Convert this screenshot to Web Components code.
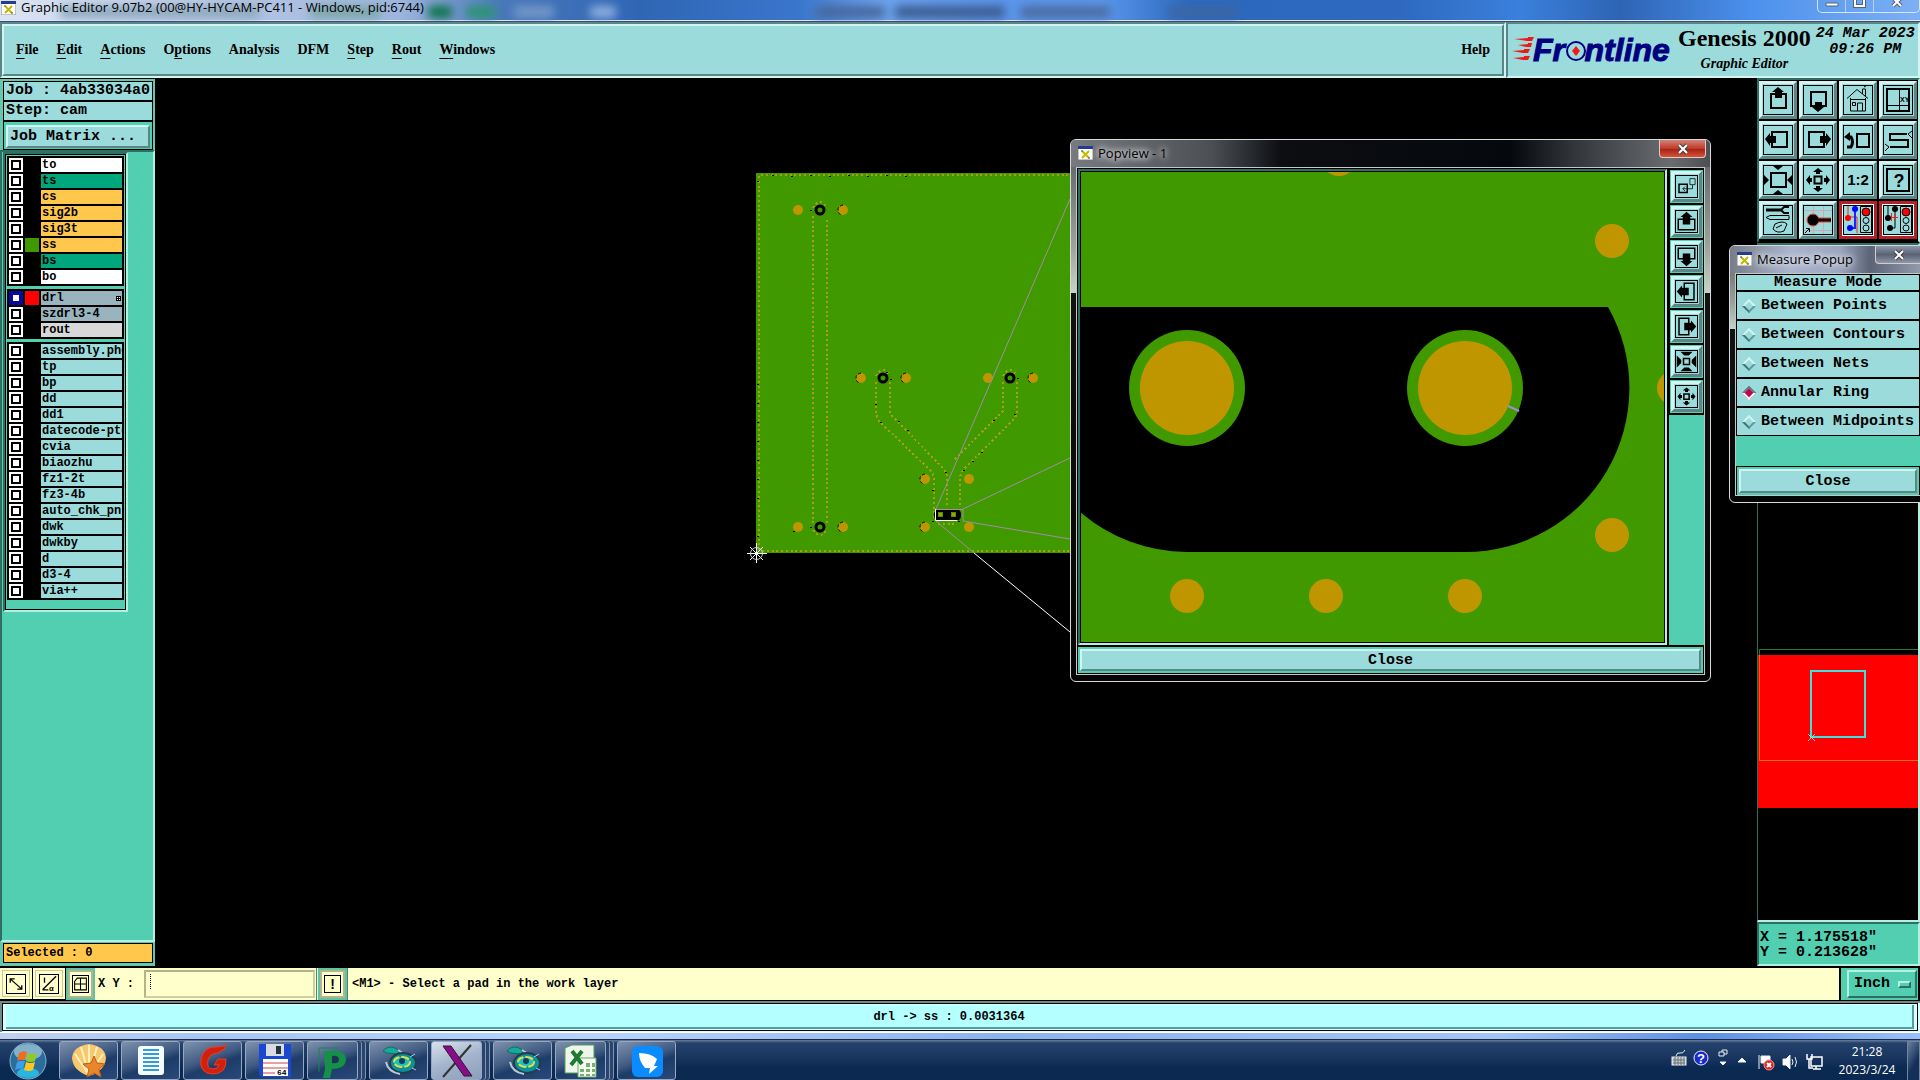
<!DOCTYPE html>
<html lang="en">
<head>
<meta charset="utf-8">
<title>Graphic Editor</title>
<style>
html,body{margin:0;height:100%;background:#000;overflow:hidden}
body{
  --cyan:#9cdbdb;--cyan-hi:#d2f4f2;--cyan-lo:#5a8688;
  --teal:#52cfb0;--teal-hi:#b4f0e2;--teal-lo:#2f6e63;
  --cream:#ffffcc;--cream-lo:#b4b48c;
  --mono:"Liberation Mono","Courier New",monospace;
  --serif:"Liberation Serif","Times New Roman",serif;
  --ui:"Open Sans","Noto Sans CJK SC",sans-serif;
  font:bold 12px/14px var(--mono);color:#000}
</style>
</head>
<body>
<gx-app></gx-app>
<script>
const define = (name, html, setup) => {
  const tpl = document.createElement('template');
  tpl.innerHTML = '<style>*{box-sizing:border-box}button,input,select{font:inherit;color:inherit;margin:0;border-radius:0}</style>' + html;
  customElements.define(name, class extends HTMLElement {
    connectedCallback() {
      if (this.shadowRoot) return;
      const root = this.attachShadow({mode: 'open'});
      root.append(tpl.content.cloneNode(true));
      if (setup) setup.call(this, root);
    }
  });
};

/* Icons on a 30 x 30 grid, the outer unit being the frame */
const ICONS = {
  up: '<path d="M8 9h15v14h-15z" class="s2"/><path d="M15 2l6 5h-2v6h-7v-6h-3z"/>',
  down: '<path d="M8 7h15v14h-15z" class="s2"/><path d="M15 27l-6-5h3v-5h7v5h2z"/>',
  left: '<path d="M9 7h15v15h-15z" class="s2"/><path d="M2 14l5-6v3h6v7h-6v3z"/>',
  right: '<path d="M6 7h15v15h-15z" class="s2"/><path d="M28 14l-5-6v3h-6v7h6v3z"/>',
  home: '<path d="M4 13.500L14 4.500L25 13.500M7.500 13v13h15v-13M7 14.500h15M9.500 17.500h3v3h-3zM14.500 26v-8h5v8M19.500 9v-5h3v7M21 2l2-1" class="s1"/>',
  xy: '<path d="M4 4h22v22h-22z" class="s2"/><path d="M16.500 4v22M4 20.500h22" class="s1"/><text x="17" y="17" font-size="7">XY</text>',
  undo: '<path d="M14 9h12v13h-12z" class="s2"/><path d="M4 22h4q3-5 0-10h-2" class="s3"/><path d="M1 12l6-5v9z"/>',
  snake: '<path d="M24 9h-17v6h18v7h-18" class="s2"/><path d="M29 6l-4 3l4 4M2 19l4 3l-4 4" class="s1"/>',
  grow: '<path d="M8 8h15v14h-15z" class="s2"/><path d="M10 1h10l-5 4zM10 29h10l-5-4zM1 10v10l5-5zM29 10v10l-5-5z"/>',
  shrink: '<path d="M11.500 11.500h7v7h-7z" class="s2"/><path d="M15 3l5 4h-3v2h-4v-2h-3zM15 27l5-4h-3v-2h-4v2h-3zM3 15l4-5v3h2v4h-2v3zM27 15l-4-5v3h-2v4h2v3z"/>',
  ratio: '<text x="15" y="20" font-size="15" text-anchor="middle">1:2</text>',
  help: '<path d="M4 4h22v22h-22z" class="s2"/><text x="16" y="22" font-size="18" text-anchor="middle">?</text>',
  tools: '<path d="M3 5h15" class="s3"/><path d="M26 2h-5l-3 3l3 3h5" class="s2"/><path d="M3 12.500l4-2h19v4h-19zM10 24l2-5q8-4 12 0l-3 7q-7 3-11-2zM13 23l6-3" class="s1"/>',
  pad: '<path d="M1 5.500h28M1 25.500h28M20.500 1v28M10.500 1v28" stroke="#d6a6ac"/><path d="M12 15h16" stroke="#ff3c3c" stroke-width="5"/><circle cx="10" cy="15" r="6" fill="#000" stroke="#ff3c3c"/><path d="M12 15h16" class="s3"/><path d="M2 28l4-4M3 23.500h3.500v3.500" class="s1"/>',
  netA: '<path d="M5 1v11h9v16" stroke="#e22" fill="none"/><path d="M12 4v19h-5" stroke="#22f" stroke-width="2" fill="none"/><circle cx="5" cy="13" r="3" fill="#f00"/><circle cx="12" cy="4" r="3" fill="#00f"/><circle cx="7" cy="23" r="3" fill="#00f"/><path d="M17.500 1.500h11v26h-11z" class="s1"/><circle cx="23" cy="7" r="4" fill="red" stroke="#000"/><circle cx="23" cy="15.500" r="3" class="s1"/><circle cx="23" cy="23" r="3" class="s1"/>',
  netB: '<path d="M5 1v12M12 4v19h-5" class="s1"/><path d="M6 12.500h9M8.500 8v8M11.500 8v8" stroke="#e22"/><circle cx="5" cy="13" r="3"/><circle cx="12" cy="4" r="3"/><circle cx="7" cy="23" r="3"/><path d="M17.500 1.500h11v26h-11z" class="s1"/><circle cx="23" cy="7" r="4" fill="red" stroke="#000"/><circle cx="23" cy="15.500" r="3" class="s1"/><circle cx="23" cy="23" r="3" class="s1"/>',
  popout: '<path d="M5 12h11v11h-11z" class="s2"/><path d="M19.500 4.500h7v8h-7zM23 13v5h-13M13 15l-3 3l3 3" class="s1"/>',
  squeeze: '<path d="M11 11h8v8h-8z" class="s2"/><path d="M7 2h16l-5 5h-6zM7 28h16l-5-5h-6zM2 7v16l6-6v-4zM28 7v16l-6-6v-4z"/>',
  bigUp: '<path d="M4 12h22v14h-22z" class="s2"/><path d="M15 2l8 7h-3v10h-10v-10h-3z"/>',
  bigDown: '<path d="M4 4h22v14h-22z" class="s2"/><path d="M15 28l-8-7h3v-10h10v10h3z"/>',
  bigLeft: '<path d="M12 4h13v22h-13z" class="s2"/><path d="M2 15l7-8v3h9v10h-9v3z"/>',
  bigRight: '<path d="M5 4h13v22h-13z" class="s2"/><path d="M28 15l-7-8v3h-9v10h9v3z"/>',
  zoomline: '<path d="M6 7L24 23M6 13v-6h7M24 17v6h-7" class="s2"/>',
  angle: '<path d="M5 24L26 3M5 24h9M8 5v8" class="s2"/><text x="15" y="26" font-size="12">α</text>',
  grid: '<path d="M9 4h17v22h-22v-16zM4 15h22M15 4v22" class="s2"/>',
  bang: '<text x="15" y="24" font-size="26" text-anchor="middle">!</text>'
};
define('gx-icon', `<style>
:host{display:block;width:30px;height:30px}
svg{display:block;width:100%;height:100%}
.s1{fill:none;stroke:#000;stroke-width:1}.s2{fill:none;stroke:#000;stroke-width:2}.s3{fill:none;stroke:#000;stroke-width:3}
text{font-family:"Liberation Sans",sans-serif;font-weight:bold}
</style><svg viewBox="1 1 28 28" aria-hidden="true"></svg>`, function (root) {
  root.querySelector('svg').innerHTML = ICONS[this.getAttribute('name')] || '';
});

define('gx-tool', `<style>
:host{display:block}
button{display:block;width:100%;padding:1px;background:var(--cyan);border:3px solid;border-color:var(--cyan-hi) var(--cyan-lo) var(--cyan-lo) var(--cyan-hi)}
:host([alert]) button{border-color:#b02228}
:host([alert]) gx-icon{outline:1px solid #fff}
gx-icon{width:100%;height:auto;aspect-ratio:1;border:1px solid #000}
</style><button type="button"></button>`, function (root) {
  const icon = document.createElement('gx-icon');
  icon.setAttribute('name', this.getAttribute('icon'));
  const button = root.querySelector('button');
  button.setAttribute('aria-label', this.getAttribute('icon'));
  button.append(icon);
});

define('gx-xmark', `<style>:host{display:block;width:15px;height:14px;flex:none}svg{display:block}</style>
<svg width="15" height="14" aria-hidden="true"><path d="M0 0h15v14h-15z" fill="#fff" stroke="#888"/><path d="M0 0h15v3h-15z" fill="#223c90"/><path d="M4 5l7 7M11 5l-7 7" stroke="#c3b800" stroke-width="2"/><path d="M3 5h2M10 12h2" stroke="#555"/></svg>`);

define('gx-titlebar', `<style>
:host{display:flex;align-items:flex-start;height:22px;border-bottom:1px solid #3b4c78;overflow:hidden;position:relative;
 box-shadow:inset 0 -1px #dfe8ff;
 background:linear-gradient(90deg,#dbe4f2 0,#b4c5e4 240px,#9db5dc 400px,#4a78ba 500px,#2f66b4 640px,#3a76cc 800px,#6ca2ec 880px,#5b95ea 1000px,#5c98ec 1100px,#2b68bd 1190px,#2e69bf 1400px,#3a80dc 1520px,#2e64b4 1620px,#4a90ec 1750px,#7eb0f4)}
gx-xmark{margin:1px 5px 0 1px;position:relative}
span{font:13px/15px var(--ui);position:relative;white-space:nowrap}
.blur{position:absolute;inset:0;filter:blur(5px)}
.blur i{position:absolute;top:6px;height:12px;border-radius:4px}
.ctl{margin-left:auto;display:flex;height:13px;position:relative;border:1px solid #d7e6ff;border-top:0;border-radius:0 0 5px 5px}
.ctl button{width:28px;padding:0;background:none;border:0;border-right:1px solid #b7cdf2;display:grid;place-items:start center}
.ctl button:last-child{width:45px;border:0}
svg{display:block}
</style>
<div class="blur"><i style="left:428px;width:24px;background:#0a7244"></i><i style="left:466px;width:30px;background:#2a9470"></i><i style="left:310px;width:70px;background:#7aa6a4"></i><i style="left:514px;width:40px;background:#7499c8"></i><i style="left:60px;width:200px;background:#8ca8bc"></i><i style="left:590px;width:26px;background:#8fb0e0"></i><i style="left:815px;width:70px;background:#46689c"></i><i style="left:895px;width:110px;background:#3c5c90"></i><i style="left:1020px;width:90px;background:#4a6ca0"></i><i style="left:1168px;width:70px;background:#3c66a4"></i></div>
<gx-xmark></gx-xmark><span>Graphic Editor 9.07b2 (00@HY-HYCAM-PC411 - Windows, pid:6744)</span>
<div class="ctl"><button aria-label="Minimize"><svg width="14" height="10"><path d="M1 3h12v3h-12z" fill="#fff" stroke="#567"/></svg></button><button aria-label="Restore"><svg width="14" height="10"><path d="M2 -2h9v8h-9z" fill="none" stroke="#567" stroke-width="4"/><path d="M2 -2h9v8h-9z" fill="none" stroke="#fff" stroke-width="2"/></svg></button><button aria-label="Close"><svg width="14" height="10"><path d="M3 -2l8 8M11 -2l-8 8" stroke="#567" stroke-width="4"/><path d="M3 -2l8 8M11 -2l-8 8" stroke="#fff" stroke-width="2"/></svg></button></div>`);

define('gx-menubar', `<style>
:host{display:block;flex:1;background:var(--cyan);border:2px solid;border-color:var(--cyan-lo) var(--cyan-hi) var(--cyan-hi) var(--cyan-lo)}
nav{display:flex;align-items:center;gap:18px;height:52px;padding:0 12px;border:2px solid;border-color:var(--cyan-hi) var(--cyan-lo) var(--cyan-lo) var(--cyan-hi)}
button{padding:0;border:0;background:none;font:bold 14px/18px var(--serif)}
button:last-child{margin-left:auto}
u{text-underline-offset:4px;text-decoration-thickness:1px}
</style><nav><button><u>F</u>ile</button><button><u>E</u>dit</button><button><u>A</u>ctions</button><button>O<u>p</u>tions</button><button>Analysis</button><button>DFM</button><button><u>S</u>tep</button><button><u>R</u>out</button><button><u>W</u>indows</button><button>Help</button></nav>`);

define('gx-brand', `<style>
:host{display:flex;align-items:flex-start;padding:2px 1px 0 4px;gap:5px;background:var(--cyan);border:2px solid;border-color:var(--cyan-lo) var(--cyan-hi) var(--cyan-hi) var(--cyan-lo)}
svg{display:block;margin-top:5px}
.name{display:flex;flex-direction:column;align-items:center;font:bold 24px/24px var(--serif);white-space:nowrap}
.name i{font-size:14px;line-height:28px}
time{font:italic bold 15px/16px var(--mono);text-align:center;white-space:nowrap}
svg text{font:italic bold 32px "Liberation Sans",sans-serif;fill:#000080;stroke:#000080;stroke-width:1}
</style>
<svg width="161" height="40" viewBox="0 0 161 40" role="img" aria-label="Frontline"><path d="M2 8l14-1v-1h6l-2 4h-5zM6 14l10-1v-1h4l-1 4h-5zM0 20l12-1v-1h6l-2 4h-5zM1 27l11-1v-1h6l-2 4h-5z" fill="#f21818"/><text x="21" y="30">Fr<tspan style="fill:none;stroke:none">o</tspan>ntline</text><circle cx="64" cy="20" r="9" fill="none" stroke="#000080" stroke-width="2"/><path d="M64 15l4 5l-4 5l-4-5z" fill="#f21818"/></svg>
<div class="name"><span>Genesis 2000</span><i>Graphic Editor</i></div>
<time>24 Mar 2023<br>09:26 PM</time>`);

const layer = (n, c, extra = '') => `<gx-layer style="--c:${c}" ${extra}>${n}</gx-layer>`;
const others = ['assembly.pho', 'tp', 'bp', 'dd', 'dd1', 'datecode-pto', 'cvia', 'biaozhu', 'fz1-2t', 'fz3-4b', 'auto_chk_pnl', 'dwk', 'dwkby', 'd', 'd3-4', 'via++'];
define('gx-layer', `<style>
:host{display:block}
label{display:grid;grid-template-columns:14px 14px 1fr;gap:2px;height:14px}
input{appearance:none;width:14px;height:14px;border:0;background:#fff;box-shadow:inset 0 0 0 2px #fff,inset 0 0 0 4px #000}
:host([work]) input{box-shadow:inset 0 0 0 4px #0a0a9a}
i{background:var(--swatch,#000)}
span{display:block;background:var(--c);padding-left:1px;overflow:hidden;white-space:nowrap;position:relative}
svg{position:absolute;right:1px;top:5px;display:none}
:host([work]) svg{display:block}
</style><label><input type="checkbox"><i></i><span><slot></slot><svg width="5" height="5"><path d="M0 0h5v5h-5z"/><path d="M1 1h1v1h-1zM3 1h1v1h-1zM1 3h1v1h-1zM3 3h1v1h-1z" fill="#fff"/></svg></span></label>`);

define('gx-sidebar', `<style>
:host{display:flex;flex-direction:column;width:155px;flex:none;border-top:1px solid #000}
.job{background:#62c9ae;padding:2px 2px 0 3px}
.row{background:var(--cyan);border:1px solid #000;height:20px;font-size:15px;line-height:18px;padding-left:2px;white-space:nowrap}
.matrix{border:1px solid #000;padding:3px 2px 1px;background:var(--teal)}
.matrix button{display:block;width:100%;height:23px;text-align:left;font-size:15px;line-height:16px;padding:0 2px;background:var(--cyan);border:2px solid;border-color:var(--cyan-hi) var(--cyan-lo) var(--cyan-lo) var(--cyan-hi)}
.layers{flex:1;background:var(--teal);border:2px solid;border-color:var(--teal-lo) var(--teal-hi) var(--teal-hi) var(--teal-lo);padding:0 1px}
.frame{width:125px;background:var(--teal);border:2px solid;border-color:#2f6e63 var(--teal-hi) var(--teal-hi) #2f6e63}
.in{border:1px solid #000;padding:1px 1px 9px;display:grid;gap:3px}
.grp{background:#000;padding:2px;display:grid;gap:2px}
.sel{background:#62c9ae;padding:1px 2px 3px 3px;margin-bottom:2px}
.sel div{border:1px solid #000;background:#ffc84c;height:20px;line-height:18px;padding-left:2px}
</style>
<div class="job"><div class="row">Job : 4ab33034a0</div><div class="row">Step: cam</div><div class="matrix"><button>Job Matrix ...</button></div></div>
<div class="layers"><div class="frame"><div class="in">
<div class="grp">${layer('to', '#fff')}${layer('ts', '#00a67c')}${layer('cs', '#ffc84c')}${layer('sig2b', '#ffc84c')}${layer('sig3t', '#ffc84c')}${layer('ss', '#ffc84c;--swatch:#419900')}${layer('bs', '#00a67c')}${layer('bo', '#fff')}</div>
<div class="grp">${layer('drl', '#9ab4be;--swatch:#f00', 'work')}${layer('szdrl3-4', '#9ab4be')}${layer('rout', '#d8d8d8')}</div>
<div class="grp">${others.map(n => layer(n, 'var(--cyan)')).join('')}</div>
</div></div></div>
<div class="sel"><div>Selected : 0</div></div>`);

const gold = (pts, r) => pts.map(([x, y]) => `<circle cx="${x}" cy="${y}" r="${r}" fill="#bf9600"/>`).join('');
const specks = (pts) => `<path fill="#000" shape-rendering="crispEdges" d="${pts.map(([x, y]) => `M${x} ${y}h2v1h-2z`).join('')}"/>`;
const edge = (pts) => `<g fill="none" stroke="#000" stroke-dasharray="3 2">${pts.map(([x, y]) => `<path d="M${x} ${y - 5}q-5 1-5 5q0 4 4 5"/>`).join('')}</g>`;
define('gx-board', `<style>:host{display:block;flex:1;min-width:0;background:#000}svg{display:block;width:100%;height:100%}</style>
<svg><g transform="translate(-155 -78)">
<path d="M756 173h320v380h-320z" fill="#419900"/>
<g fill="none" stroke="#a8a012" stroke-width="2" stroke-dasharray="2 2.770" shape-rendering="crispEdges">
<path d="M759 176v374M761 175h309M762 551h308M813 216v308M827 220v304M813 208q7-12 14 0M813 530q7 10 14 0"/>
<path d="M876 382v28q0 8 5 13l50 48q3 4 3 8v40M890 382v28q0 5 4 8l49 50q4 5 4 9v30M876 376q7-12 14 0"/>
<path d="M1003 382v29l-50 50M1017 382v28q0 6-4 10l-50 50q-3 5-3 9v26M1003 376q7-12 14 0M938 524h16"/></g>
${specks([[772, 175], [791, 176], [810, 175], [829, 176], [848, 175], [867, 176], [886, 175], [905, 176], [757, 181], [757, 384], [757, 403], [757, 422], [757, 441], [757, 460], [757, 479], [757, 498], [757, 536], [810, 210], [810, 527], [875, 404], [880, 422], [898, 421], [907, 430], [886, 372], [890, 379], [1014, 414], [993, 420], [981, 452], [972, 461], [963, 470], [945, 472], [932, 490], [1017, 378], [793, 531], [901, 378], [1028, 378], [958, 521], [932, 521]])}
${gold([[798, 210], [843, 210], [861, 378], [906, 378], [988, 378], [1033, 378], [925, 479], [969, 479], [798, 527], [843, 527], [925, 527], [969, 527]], 5)}
${edge([[843, 210], [861, 378], [906, 378], [1033, 378], [925, 479], [843, 527], [925, 527]])}
<g fill="#419900" stroke="#000" stroke-width="3"><circle cx="820" cy="210" r="4"/><circle cx="883" cy="378" r="4"/><circle cx="1010" cy="378" r="4"/><circle cx="820" cy="527" r="4"/></g>
<rect x="934" y="509" width="27" height="12" rx="5" fill="#000"/>
<path d="M938 512h5v5h-5zM951 512h5v5h-5z" fill="#419900"/><path d="M939 513h3v3h-3zM952 513h3v3h-3z" fill="#bf9600"/>
<path d="M936 509.500h27v11" fill="none" stroke="#a58fa5"/><path d="M935.500 509v11.500h22" fill="none" stroke="#fff"/>
<path d="M936 509L1070 199M963 509L1070 458M963 521L1070 539M936 521L974 553" fill="none" stroke="#a58aaa"/>
<path d="M974 553L1070 632" stroke="#fff"/>
<path d="M747 553.500h20M756.500 543v20M750 547l13 13M763 547l-13 13" stroke="#fff" fill="none"/><circle cx="756.500" cy="553.500" r="6" fill="none" stroke="#ccc"/>
</g></svg>`);

define('gx-overview', `<style>:host{display:block;min-height:0;flex:1;background:#000;border:2px solid;border-left-width:1px;border-color:var(--teal-lo) var(--teal-hi) var(--teal-hi) var(--teal-lo);overflow:hidden}svg{display:block;width:100%;height:100%}</style>
<svg><g transform="translate(-1758 -245)"><path d="M1758 655h163v153h-163z" fill="red"/><path d="M1759.500 655v-5.500h162" fill="none" stroke="#2f7a20"/><path d="M1759.500 655v105.500h162" fill="none" stroke="#f07010"/><rect x="1811" y="671" width="54" height="66" fill="none" stroke="#40e0e0" stroke-width="2"/><path d="M1808 734l7 7M1815 734l-7 7" stroke="#9cdbdb"/></g></svg>`);

define('gx-rightbar', `<style>
:host{display:flex;flex-direction:column;width:163px;flex:none}
.tools{display:grid;grid-template-columns:repeat(4,38px);gap:2px;padding:1px 0 2px 0;background:#000;border:2px solid;border-color:var(--teal-lo) var(--teal-hi) #000 var(--teal-lo)}
.xy{background:var(--teal);border:2px solid;border-color:var(--teal-lo) var(--teal-hi) var(--teal-hi) var(--teal-lo);height:44px;padding:6px 1px 0;font-size:15px;line-height:15px;white-space:pre;margin-bottom:2px}
</style><div class="tools">${'up down home xy left right undo snake grow shrink ratio help tools pad'.split(' ').map(n => `<gx-tool icon="${n}"></gx-tool>`).join('')}<gx-tool icon="netA" alert></gx-tool><gx-tool icon="netB" alert></gx-tool></div>
<gx-overview></gx-overview><div class="xy">X = 1.175518"
Y = 0.213628"</div>`);

define('gx-window', `<style>
:host{display:flex;flex-direction:column;position:absolute;border:1px solid #d8d8dc;border-radius:6px;background:linear-gradient(180deg,#555a5e 0,#9aa49e calc(var(--shine) * .7),#c4d4c8 var(--shine),#101412 var(--shine),#050505);padding:0 5px 6px;overflow:hidden}
header{display:flex;align-items:center;height:27px;margin:0 -5px;padding:0 4px 2px 7px;background:var(--glass)}
header gx-xmark{margin-right:5px}
header span{font:13px/16px var(--ui);white-space:nowrap;text-shadow:0 0 6px #fff,0 0 8px #fff}
header button{align-self:flex-start;margin-left:auto;width:47px;height:18px;padding:0;border:1px solid #e0c8c8;border-top:0;border-radius:0 0 4px 4px;background:var(--close,linear-gradient(#d08478,#c03a28 50%,#a81c10 51%,#d0563c));display:grid;place-items:center}
.body{flex:1;display:flex;flex-direction:column;border:1px solid #c4c8c8;background:#000;min-height:0}
</style><header><gx-xmark></gx-xmark><span></span><button aria-label="Close"><svg width="14" height="12"><path d="M3 2l8 8M11 2l-8 8" stroke="#444" stroke-width="4"/><path d="M3 2l8 8M11 2l-8 8" stroke="#fff" stroke-width="2"/></svg></button></header><div class="body"><slot></slot></div>`, function (root) {
  root.querySelector('span').textContent = this.getAttribute('heading');
});

define('gx-close', `<style>
:host{display:block;border:2px solid var(--teal);background:var(--teal);margin:1px}
button{display:block;width:100%;height:var(--h,22px);padding:1px 0 0;font-size:15px;line-height:17px;background:var(--cyan);border:2px solid;border-color:var(--cyan-hi) var(--cyan-lo) var(--cyan-lo) var(--cyan-hi)}
</style><button type="button">Close</button>`);

define('gx-popview', `<style>
:host{display:flex;flex-direction:column;flex:1;min-height:0}
.top{display:flex;flex:1;min-height:0;gap:2px;margin:1px 0}
.view{flex:1;border:2px solid;border-color:var(--teal-lo) var(--teal-hi) var(--teal-hi) var(--teal-lo);min-width:0;margin-left:1px}
.view svg{display:block;width:100%;height:100%;background:#419900;border:1px solid #000}
.bar{width:35px;display:flex;flex-direction:column;gap:2px;padding:1px 1px 0}
.bar div{background:var(--teal);padding:1px}
.bar i{flex:1;background:var(--teal);margin:0 -1px}
</style>
<div class="top"><div class="view"><svg viewBox="1081 172 583 470" preserveAspectRatio="none">
<path d="M1080 307H1608A164 164 0 0 1 1465 552H1187A164 164 0 0 1 1080 512z"/>
<g fill="#419900"><circle cx="1187" cy="388" r="58"/><circle cx="1465" cy="388" r="58"/></g>
${gold([[1187, 388], [1465, 388]], 47)}${gold([[1612, 241], [1612, 535], [1187, 596], [1326, 596], [1465, 596], [1339, 159], [1674, 388]], 17)}
<path d="M1508 406l11 5" stroke="#a58ad0" stroke-width="2"/></svg></div>
<div class="bar">${'popout bigUp bigDown bigLeft bigRight squeeze shrink'.split(' ').map(n => `<div><gx-tool icon="${n}"></gx-tool></div>`).join('')}<i></i></div></div>
<gx-close></gx-close>`);

define('gx-measure', `<style>
:host{display:flex;flex-direction:column;flex:1;background:#000}
fieldset{border:0;margin:0;padding:1px 1px 0;display:grid;gap:2px;font-size:15px;min-width:0}
h2{margin:0;font:inherit;line-height:15px;text-align:center;background:var(--cyan)}
label{display:flex;align-items:center;gap:7px;height:27px;padding-left:7px;background:var(--cyan);white-space:nowrap}
input{appearance:none;width:10px;height:10px;rotate:45deg;border:2px solid;border-color:var(--cyan-hi) #5f9a9c #3f7476 var(--cyan-hi);background:var(--cyan)}
input:checked{background:#c8004c;border-color:#5a8688 #fff #fff #5a8688}
p{margin:1px 0 0;flex:1;background:var(--teal)}
gx-close{margin-bottom:0}
</style><fieldset><h2>Measure Mode</h2>${['Points', 'Contours', 'Nets'].map(t => `<label><input type="radio" name="m">Between ${t}</label>`).join('')}<label><input type="radio" name="m" checked>Annular Ring</label><label><input type="radio" name="m">Between Midpoints</label></fieldset><p></p><gx-close style="--h:24px"></gx-close>`);

define('gx-inputbar', `<style>
:host{display:flex;height:32px;background:var(--cream);align-items:stretch}
.b{width:33px;border:1px solid #000;border-left:0;border-top:0;padding:2px;background:var(--cream)}
.t{width:29px;background:#5fc4a4;padding:2px}
.b button,.t button{width:100%;height:100%;padding:1px;background:var(--cream);border:2px solid var(--cream-lo);display:grid;place-items:center}
.b button{border:1px solid #c8c896}
gx-icon{width:20px;height:20px;border:1px solid #000}
.t gx-icon{width:17px;height:18px}
label{display:flex;align-items:center;gap:10px;padding-left:3px;white-space:pre}
input{width:171px;height:28px;background:repeating-linear-gradient(#000 0 1px,transparent 1px 2px) 4px 2px/1px 16px no-repeat var(--cream);border:2px solid;border-color:var(--cream-lo) #d0d0a8 #d0d0a8 var(--cream-lo);outline:0;padding:0 4px}
.l{width:1px;margin:0 1px;background:#3f8a70}
p{flex:1;margin:0;line-height:32px;padding-left:4px;border-left:1px solid #3f8a70}
.unit{width:81px;background:var(--teal);border-left:2px solid #000;border-right:2px solid #000;padding:2px 1px 2px 6px}
.unit div{position:relative;height:28px;border:2px solid;border-color:var(--teal-hi) var(--teal-lo) var(--teal-lo) var(--teal-hi)}
select{appearance:none;width:100%;height:100%;border:0;background:none;padding:0 5px;font-size:15px}
.unit i{position:absolute;right:4px;top:9px;width:13px;height:7px;border:2px solid;border-color:var(--teal-hi) var(--teal-lo) var(--teal-lo) var(--teal-hi);pointer-events:none}
</style><div class="b"><button aria-label="Line"><gx-icon name="zoomline"></gx-icon></button></div><div class="b"><button aria-label="Angle"><gx-icon name="angle"></gx-icon></button></div><div class="t"><button aria-label="Grid"><gx-icon name="grid"></gx-icon></button></div><label><span>X Y :</span><input type="text"></label><div class="l"></div><div class="t"><button aria-label="Alert"><gx-icon name="bang"></gx-icon></button></div><p>&lt;M1&gt; - Select a pad in the work layer</p><div class="unit"><div><select aria-label="Units"><option>Inch</option></select><i></i></div></div>`);

define('gx-message', `<style>
:host{display:block;margin-top:1px;background:#d8ffff;border-top:2px solid #6a8c8c;border-left:2px solid #6a8c8c;height:31px;padding-right:2px}
div{height:28px;border:1px solid #000;padding:1px 3px;background:#d8ffff}
p{margin:0;height:24px;background:#b4ffff;border-right:2px solid #5a9a9c;border-bottom:2px solid #5a9a9c;line-height:24px;text-align:center;padding-right:20px}
</style><div><p>drl -&gt; ss : 0.0031364</p></div>`);

const REEL = '<path d="M3 9q6-7 14-2q3 4 0 5l-10-1z" fill="#18a8a0" stroke="#075"/><path d="M18 8l6 4" stroke="#b8c8d8" stroke-width="2"/><ellipse cx="23" cy="21" rx="13" ry="10" fill="#0f8f98" stroke="#243c4c" stroke-width="2"/><ellipse cx="22" cy="20" rx="8" ry="5" fill="#22c0b8" stroke="#dde04c" stroke-width="2" stroke-dasharray="8 2"/><circle cx="22" cy="19" r="3" fill="#163c60"/><path d="M6 20q2 10 14 12" stroke="#b8c8d8" stroke-width="2" fill="none"/><path d="M30 15l5-3M32 26l4 2" stroke="#9cf" stroke-width="1"/>';
const APPS = [
  '<path d="M19 34q-16-5-17-18q1-12 17-14q16 2 17 14q-1 13-17 18z" fill="#f6c870"/><path d="M19 33L5 12M19 33L11 5M19 33V3M19 33L27 5M19 33L33 12" stroke="#fff0bc" stroke-width="2"/><path d="M24 14l3 7l8 1l-6 5l2 8l-7-4l-7 4l2-8l-6-5l8-1z" fill="#e8862c" stroke="#c05c10"/>',
  '<rect x="6" y="4" width="26" height="29" rx="3" fill="#f4fbff"/><path d="M11 8h16M11 12h16M11 16h16M11 20h16M11 24h16M11 28h16" stroke="#379ad4" stroke-width="2"/>',
  '<path d="M32 3q-1 5-5 6l-3 2q-8 0-10 7q-2 9 5 9q5 0 6-4h-5l4-6h8q1 15-14 15q-13-1-11-15q3-12 14-12q7 0 11-2z" fill="#d02010" stroke="#e84020"/>',
  '<path d="M3 2h32v33h-29l-3-3z" fill="#1b48d0"/><path d="M10 2h18v12h-18z" fill="#d8dce0"/><path d="M20 4h5v8h-5z" fill="#234"/><path d="M7 17h25v17h-25z" fill="#fff"/><path d="M7 21h25M7 26h25M7 31h12" stroke="#c44"/><text x="21" y="33" font-size="8" font-weight="bold">64</text>',
  '<path d="M5 30V6h20" fill="none" stroke="#128a50"/><path d="M10 9h14q9 2 8 10q-2 8-14 8l-2 9h-7l2-9z" fill="#159048"/><path d="M18 14q7-1 7 4q-1 4-7 3z" fill="#1e3354"/>',
  REEL,
  '<path d="M33 3L5 35" stroke="#333" stroke-width="2"/><path d="M5 4h8l21 30h-8z" fill="#8c0a8c" stroke="#222"/>',
  REEL,
  '<path d="M3 6l7-3h22v20l-3 8h-26z" fill="#eef6ec" stroke="#5a9c58"/><path d="M16 16h18v19h-18z" fill="#f4faf2" stroke="#6aa868"/><path d="M18 27h4v3h-4zM24 21h4v4h-4zM30 21h3v4h-3zM24 27h4v3h-4zM30 27h3v3h-3zM18 32h4v2h-4zM24 32h4v2h-4zM30 32h3v2h-3z" fill="#78b070"/><path d="M10 9l10 13M20 9l-11 14" stroke="#1e7a30" stroke-width="4"/>',
  '<rect x="4" y="4" width="31" height="31" rx="6" fill="#0a8cff"/><path d="M11 11q12 0 18 6l-3 7h4l-9 8l1-6h-5q-6-7-6-15z" fill="#fff"/>'
];
const STACK = {4: 'stack', 6: 'stack on', 8: 'stack'};
define('gx-taskbar', `<style>
:host{display:block}
.strip{height:7px;border-top:1px solid #fff;background:linear-gradient(90deg,#c0d0f0,#a8c6f4 200px,#b8d2fa 600px,#8cb2ee 1000px,#a4c4f4 1500px,#5d90e4 1700px,#9cc0f8)}
.bar{display:flex;height:41px;background:linear-gradient(#6a7f9e 0,#24426c 3px,#1c3964 14px,#0b2a52 28px,#0a2850);border-top:1px solid #1a2a44;padding:1px 0 0 0}
.orb{width:56px;margin-right:3px;padding:0;border:0;background:none;display:grid;place-items:center}
.app{width:59px;height:39px;margin-right:3px;padding:0;border:1px solid #96a8c2;border-radius:3px;background:linear-gradient(160deg,#7e92ae 0,#405a82 45%,#1d3c68 60%,#29497a);display:grid;place-items:center}
.stack{width:51px;margin-right:11px;box-shadow:3px 0 0 #2a4470,4px 0 0 #8294ae,7px 0 0 #2a4470,8px 0 0 #8294ae}
.on{background:linear-gradient(160deg,#d8e2ee,#a4b4cc 50%,#8c9ebc)}
svg{display:block}
.tray{margin-left:auto;display:flex;align-items:center;gap:4px;color:#fff}
time{font:12px/18px var(--ui);text-align:center;width:72px;margin-left:4px}
.show{width:13px;height:40px;padding:0;border:1px solid #74849c;background:linear-gradient(120deg,#6a7f9e,#14305a 60%)}
</style><div class="strip"></div><div class="bar"><button class="orb" aria-label="Start"><svg width="40" height="40"><circle cx="20" cy="20" r="18" fill="#2a6c9c" stroke="#8cb4cc"/><ellipse cx="20" cy="11" rx="14" ry="8" fill="#a8cede" opacity=".7"/><ellipse cx="20" cy="32" rx="11" ry="5" fill="#28c8f0" opacity=".8"/><path d="M11 12q4-3 8-1l-2 8q-4-1-8 1z" fill="#f06c20"/><path d="M20 12q4 2 9 0l-2 8q-4 2-9 0z" fill="#90c828"/><path d="M9 21q4-2 8-1l-2 8q-4-1-8 1z" fill="#38a0e8"/><path d="M18 21q4 2 9 0l-2 8q-4 2-9 0z" fill="#fcc820"/></svg></button>
${APPS.map((a, i) => `<button class="app ${STACK[i] || ''}" aria-label="App ${i + 1}"><svg width="38" height="38">${a}</svg></button>`).join('')}
<div class="tray"><svg width="152" height="36" fill="none" stroke="#e8eef4">
<rect x="1" y="14" width="14" height="8" fill="#c8ccd0"/><path d="M2 17h12M2 20h12M4 14v8M7 14v8M10 14v8M13 14v8" stroke="#677"/><path d="M5 13q1-4 4-3t5-3"/>
<circle cx="30" cy="15" r="7" fill="#1a2ad0"/><text x="30" y="20" font-family="Liberation Sans" font-size="13" font-weight="bold" fill="#fff" stroke="none" text-anchor="middle">?</text>
<path d="M48 9h5v4h-5zM51 9v-2h5v4h-3"/><path d="M49 19h6l-3 3z" fill="#fff"/><path d="M67 19l4-4l4 4z" fill="#fff"/>
<path d="M88 12v14"/><path d="M90 13h9v7h-9z" fill="#fff"/><circle cx="98" cy="22" r="5" fill="#d82a20" stroke="#f88"/><path d="M96 20l4 4M100 20l-4 4" stroke="#fff" stroke-width="2"/>
<path d="M112 16h3l4-4v14l-4-4h-3z" fill="#fff"/><path d="M121 16q2 3 0 6M124 14q3 5 0 10"/><path d="M140 14h11v9h-11zM142 26h8M145 23v3M136 11v5h5v-5M138 16v9h4" stroke="#fff" stroke-width="1.500"/></svg>
<time>21:28<br>2023/3/24</time><button class="show" aria-label="Show desktop"></button></div></div>`);

define('gx-app', `<style>
:host{display:flex;flex-direction:column;height:100vh;position:relative;overflow:hidden}
.head{display:flex;height:56px}
gx-brand{width:414px}
main{display:flex;flex:1;min-height:0}
.pop{right:209px;top:139px;width:641px;height:543px;--shine:153px;--glass:linear-gradient(90deg,#777b80,#4c5054 140px,#0c0e12 210px,#05080c 440px,#303438 500px,#6a6c70 600px,#4c4e52)}
.mea{right:-7px;top:245px;width:198px;height:258px;--shine:83px;--glass:linear-gradient(90deg,#777d88,#aab4cc 60px,#9aa4bc 110px,#5c6478 140px,#98a0b4);--close:linear-gradient(#8e98ac,#5a6272 50%,#8e98ac)}
</style><gx-titlebar></gx-titlebar><div class="head"><gx-menubar></gx-menubar><gx-brand></gx-brand></div>
<main><gx-sidebar></gx-sidebar><gx-board></gx-board><gx-rightbar></gx-rightbar></main>
<gx-inputbar></gx-inputbar><gx-message></gx-message><gx-taskbar></gx-taskbar>
<gx-window class="pop" heading="Popview - 1"><gx-popview></gx-popview></gx-window>
<gx-window class="mea" heading="Measure Popup"><gx-measure></gx-measure></gx-window>`);
</script>
</body>
</html>
